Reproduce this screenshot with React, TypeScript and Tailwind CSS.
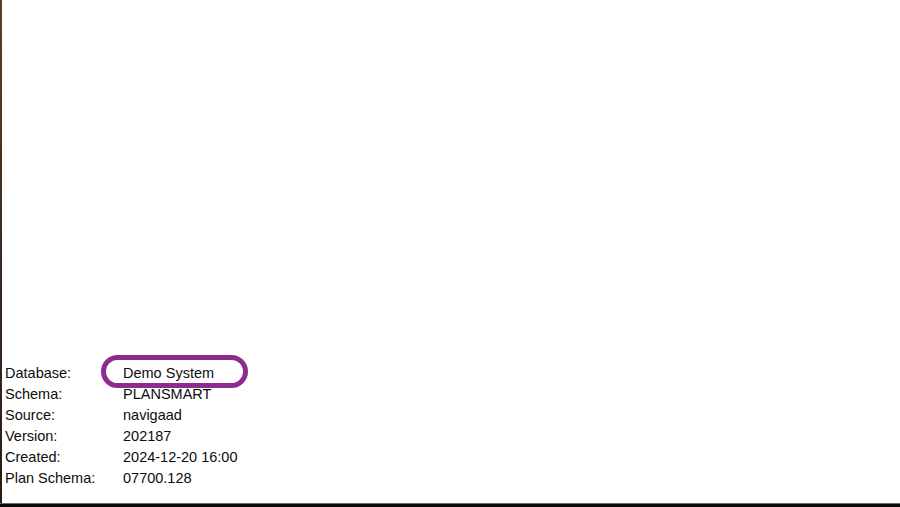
import React from 'react'

const ROWS: [string, string][] = [
  ['Database:', 'Demo System'],
  ['Schema:', 'PLANSMART'],
  ['Source:', 'navigaad'],
  ['Version:', '202187'],
  ['Created:', '2024-12-20 16:00'],
  ['Plan Schema:', '07700.128'],
]

export default function App() {
  return (
    <div className="flex h-[507px] w-[900px] flex-col overflow-hidden bg-black">
      <div className="flex min-h-0 flex-1">
        {/* sliver of desktop wallpaper on the left edge */}
        <div className="w-[2px] bg-gradient-to-b from-[#5a4020] via-[#3a2a22] to-[#2a1c14]" />
        <div className="flex flex-1 flex-col justify-end bg-white pb-[14px] pl-[3px] font-['Liberation_Sans',Arial,sans-serif] text-[14.5px] text-[#0d0d0d]">
          {ROWS.map(([label, value], i) => (
            <div key={label} className="flex h-[21px] items-center leading-[21px]">
              <span className="w-[118px] shrink-0">{label}</span>
              <span className="relative">
                {value}
                {i === 0 && (
                  <span className="pointer-events-none absolute -top-[8px] -left-[22px] h-[33px] w-[147px] rounded-full border-[5px] border-[#8c2b90]" />
                )}
              </span>
            </div>
          ))}
        </div>
      </div>
      <div className="h-[1px] bg-[#6b6b6b]" />
      <div className="h-[3px] bg-[#0a0a0a]" />
    </div>
  )
}
